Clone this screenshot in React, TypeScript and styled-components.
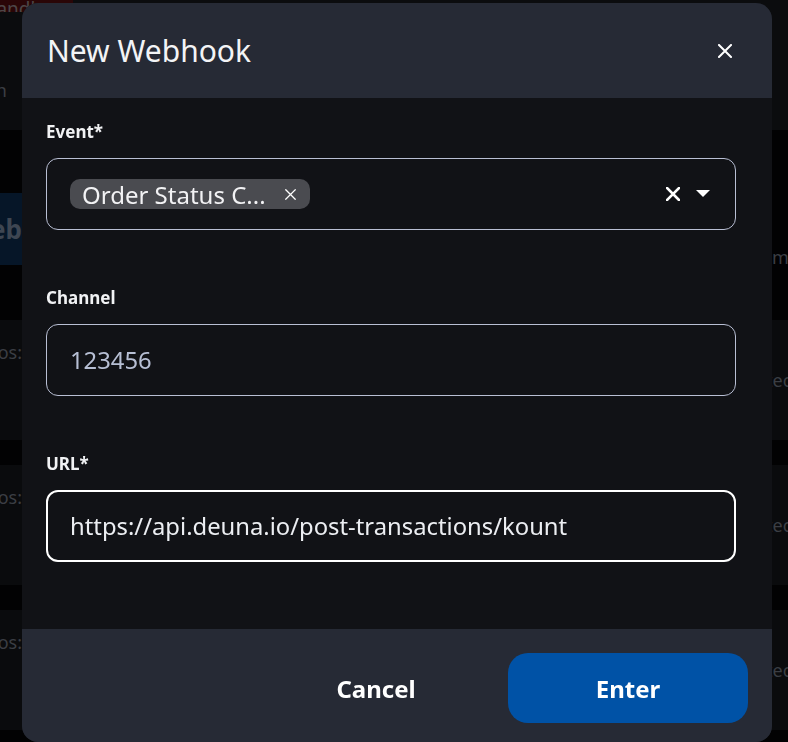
import React from "react";
import styled, { createGlobalStyle } from "styled-components";

const GlobalStyle = createGlobalStyle`
  html, body {
    margin: 0;
    padding: 0;
    background: #020203;
    overflow: hidden;
  }
  body {
    font-family: "Noto Sans", "Open Sans", sans-serif;
  }
  * { box-sizing: border-box; }
`;

/* ---------- page behind the dialog (dimmed) ---------- */

const Page = styled.div`
  width: 788px;
  height: 742px;
  display: flex;
  flex-direction: column;
  overflow: hidden;
  background: #020203;
  color: #3b3e44;
  font-size: 18px;

  & > * {
    flex-shrink: 0;
  }
`;

const TopBar = styled.div`
  height: 12px;
  background: #0b0c0e;
  display: flex;
  align-items: flex-end;
  overflow: hidden;
`;

const EnvBadge = styled.span`
  display: inline-block;
  margin-left: -24px;
  padding: 0 10px;
  background: #2a0607;
  color: #4d4647;
  font-size: 19px;
  line-height: 20px;
  transform: translateY(7px);
`;

const Heading = styled.div`
  height: 118px;
  background: #0b0c0e;
  padding-top: 66px;
`;

const Clip = styled.div<{ $w: number }>`
  width: ${(p) => p.$w}px;
  overflow: hidden;
  display: flex;
  justify-content: flex-end;
  white-space: nowrap;
`;

const Band = styled.div<{ $h: number }>`
  height: ${(p) => p.$h}px;
`;

const Toolbar = styled.div`
  height: 72px;
  display: flex;
  justify-content: space-between;
`;

const GhostButton = styled.div`
  width: 22px;
  background: #061628;
  display: flex;
  align-items: center;
  justify-content: flex-end;
  overflow: hidden;
  white-space: nowrap;
  color: #3e4652;
  font-size: 26px;
  font-weight: 700;
`;

const SideNote = styled.div`
  width: 16px;
  overflow: hidden;
  white-space: nowrap;
  align-self: flex-end;
  margin-bottom: -4px;
`;

const Row = styled.div`
  height: 120px;
  margin-bottom: 25px;
  background: #0a0b0d;
  display: flex;
  justify-content: space-between;
`;

const RowLeft = styled(Clip)`
  padding-top: 20px;
`;

const RowRight = styled.div`
  width: 22px;
  overflow: hidden;
  white-space: nowrap;
  padding-top: 48px;
`;

/* ---------- dialog ---------- */

const Overlay = styled.div`
  position: fixed;
  inset: 0;
  display: flex;
  align-items: flex-start;
  padding: 3px 0 0 22px;
`;

const Dialog = styled.div`
  width: 750px;
  height: 739px;
  border-radius: 16px;
  overflow: hidden;
  display: flex;
  flex-direction: column;
  background: #111216;
`;

const Header = styled.div`
  height: 95px;
  flex-shrink: 0;
  background: #262a35;
  display: flex;
  align-items: center;
  justify-content: space-between;
  padding: 0 31px 0 25px;
`;

const Title = styled.h2`
  margin: 0;
  font-size: 30px;
  font-weight: 400;
  color: #f3f4f6;
`;

const IconButton = styled.button`
  width: 32px;
  height: 32px;
  border: 0;
  padding: 0;
  background: transparent;
  display: flex;
  align-items: center;
  justify-content: center;
  cursor: pointer;
`;

const Body = styled.div`
  flex: 1;
  min-height: 0;
  padding: 23px 36px 67px 24px;
  display: flex;
  flex-direction: column;
  gap: 57px;
`;

const Field = styled.div`
  display: flex;
  flex-direction: column;
  gap: 15px;
`;

const Label = styled.label`
  font-size: 17px;
  line-height: 22px;
  font-weight: 700;
  color: #f1f2f4;
`;

const Control = styled.div<{ $focused?: boolean }>`
  height: 72px;
  flex-shrink: 0;
  border-radius: 12px;
  border: ${(p) => (p.$focused ? "2px solid #ffffff" : "1px solid #b9bfd4")};
  padding: 0 25px 0 ${(p) => (p.$focused ? 22 : 23)}px;
  display: flex;
  align-items: center;
  gap: 12px;
`;

const Value = styled.span<{ $muted?: boolean }>`
  flex: 1;
  font-size: 23.8px;
  color: ${(p) => (p.$muted ? "#b7bfd4" : "#eceef2")};
  white-space: nowrap;
`;

const Chip = styled.span`
  height: 30px;
  width: 240px;
  border-radius: 10px;
  background: #4a4b50;
  display: flex;
  align-items: center;
  justify-content: space-between;
  padding: 0 14px 0 12px;
  color: #f2f2f4;
  font-size: 24px;
  white-space: nowrap;
`;

const Spacer = styled.span`
  flex: 1;
`;

const Actions = styled.span`
  display: flex;
  align-items: center;
  gap: 16px;
`;

const Footer = styled.div`
  flex-shrink: 0;
  background: #262a35;
  padding: 24px 24px 19px;
  display: flex;
  justify-content: flex-end;
  gap: 12px;
`;

const Button = styled.button<{ $primary?: boolean }>`
  width: 240px;
  height: 70px;
  border: 0;
  border-radius: 20px;
  background: ${(p) => (p.$primary ? "#0052a6" : "transparent")};
  color: #ffffff;
  font-family: inherit;
  font-size: 24px;
  font-weight: 700;
  cursor: pointer;
`;

const Cross = ({ size, stroke }: { size: number; stroke: number }) => (
  <svg width={size} height={size} viewBox="0 0 14 14">
    <path d="M1 1L13 13M13 1L1 13" stroke="#fff" strokeWidth={stroke} strokeLinecap="square" />
  </svg>
);

const Caret = () => (
  <svg width="14" height="8" viewBox="0 0 14 8">
    <polygon points="0,0 14,0 7,7" fill="#fff" />
  </svg>
);

export default function App() {
  const rows = ["Webhook Kontos:", "Webhook Kontos:", "Webhook Kontos:"];
  return (
    <>
      <GlobalStyle />
      <Page>
        <TopBar>
          <EnvBadge>Sandbox</EnvBadge>
        </TopBar>
        <Heading>
          <Clip $w={7}>Integration</Clip>
        </Heading>
        <Band $h={63} />
        <Toolbar>
          <GhostButton>+ Web</GhostButton>
          <SideNote>m</SideNote>
        </Toolbar>
        <Band $h={55} />
        {rows.map((r, i) => (
          <Row key={i}>
            <RowLeft $w={22}>{r}</RowLeft>
            <RowRight>tected</RowRight>
          </Row>
        ))}
      </Page>

      <Overlay>
        <Dialog role="dialog" aria-label="New Webhook">
          <Header>
            <Title>New Webhook</Title>
            <IconButton aria-label="Close">
              <Cross size={14} stroke={2} />
            </IconButton>
          </Header>

          <Body>
            <Field>
              <Label>Event*</Label>
              <Control>
                <Chip>
                  <span>Order Status C...</span>
                  <Cross size={11} stroke={1.6} />
                </Chip>
                <Spacer />
                <Actions>
                  <Cross size={14} stroke={2.6} />
                  <Caret />
                </Actions>
              </Control>
            </Field>

            <Field>
              <Label>Channel</Label>
              <Control>
                <Value $muted>123456</Value>
              </Control>
            </Field>

            <Field>
              <Label>URL*</Label>
              <Control $focused>
                <Value>https://api.deuna.io/post-transactions/kount</Value>
              </Control>
            </Field>
          </Body>

          <Footer>
            <Button>Cancel</Button>
            <Button $primary>Enter</Button>
          </Footer>
        </Dialog>
      </Overlay>
    </>
  );
}
